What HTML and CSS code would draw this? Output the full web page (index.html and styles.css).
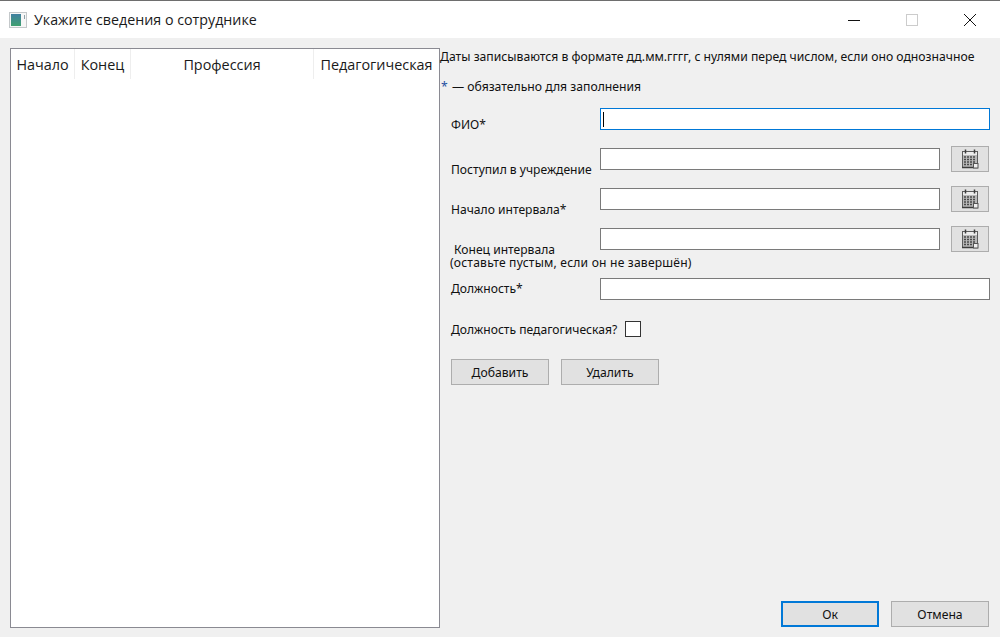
FILE: index.html
```html
<!DOCTYPE html>
<html>
  <head>
    <meta charset="utf-8" />
    <title>Укажите сведения о сотруднике</title>
    <link rel="stylesheet" href="styles.css">
  </head>

  <body>
    <div class="titlebar">
      <svg class="app-icon" width="18" height="16" viewBox="0 0 18 16">
        <defs>
          <linearGradient id="appfill" x1="0" y1="0" x2="0" y2="1">
            <stop offset="0" stop-color="#3f7fa0" />
            <stop offset="1" stop-color="#3fa070" />
          </linearGradient>
        </defs>
        <rect x="0.5" y="0.5" width="17" height="15" fill="#f6f6f6" stroke="#c4c8ca" />
        <rect x="2" y="2" width="10" height="12" fill="url(#appfill)" />
        <rect x="15" y="3" width="1" height="4" fill="#8fa0a8" />
      </svg>
      <span class="title">Укажите сведения о сотруднике</span>
      <div class="win-buttons">
        <svg width="12" height="12" viewBox="0 0 12 12"><path d="M0 6.5H12" stroke="#111" fill="none" /></svg>
        <svg width="12" height="12" viewBox="0 0 12 12"><rect x="0.5" y="0.5" width="11" height="11" stroke="#ccc" fill="none" /></svg>
        <svg width="12" height="12" viewBox="0 0 12 12"><path d="M0 0L12 12M12 0L0 12" stroke="#111" fill="none" /></svg>
      </div>
    </div>

    <div class="content">
      <div class="table">
        <div class="thead">
          <div class="th th-start">Начало</div>
          <div class="th th-end">Конец</div>
          <div class="th th-job">Профессия</div>
          <div class="th th-ped">Педагогическая</div>
        </div>
      </div>

      <div class="panel">
        <p class="hint">Даты записываются в формате дд.мм.гггг, с нулями перед числом, если оно однозначное</p>
        <p class="hint hint-req"><span class="star">*</span> — обязательно для заполнения</p>

        <div class="form">
          <div class="row row-name">
            <label class="lbl">ФИО*</label>
            <div class="field focused"><span class="caret"></span></div>
          </div>
          <div class="row row-date">
            <label class="lbl">Поступил в учреждение</label>
            <div class="field"></div>
            <button class="cal" type="button"><svg width="18" height="20" viewBox="0 0 18 20"><use href="#calendar" /></svg></button>
          </div>
          <div class="row row-date">
            <label class="lbl lbl-start">Начало интервала*</label>
            <div class="field"></div>
            <button class="cal" type="button"><svg width="18" height="20" viewBox="0 0 18 20"><use href="#calendar" /></svg></button>
          </div>
          <div class="row row-date row-end">
            <label class="lbl lbl-end"><span class="indent">Конец интервала</span><br /><span class="note">(оставьте пустым, если он не завершён)</span></label>
            <div class="field"></div>
            <button class="cal" type="button"><svg width="18" height="20" viewBox="0 0 18 20"><use href="#calendar" /></svg></button>
          </div>
          <div class="row row-post">
            <label class="lbl">Должность*</label>
            <div class="field"></div>
          </div>
        </div>

        <div class="check-row">
          <span>Должность педагогическая?</span>
          <span class="checkbox"></span>
        </div>

        <div class="actions">
          <button class="btn" type="button">Добавить</button>
          <button class="btn" type="button">Удалить</button>
        </div>

        <div class="footer">
          <button class="btn btn-default" type="button">Ок</button>
          <button class="btn" type="button">Отмена</button>
        </div>
      </div>
    </div>

    <!-- calendar icon used by the three date buttons -->
    <svg class="defs" width="0" height="0">
      <symbol id="calendar" viewBox="0 0 18 20">
        <rect x="1.5" y="2.5" width="15" height="16" fill="#b8b8b8" stroke="#5c5c5c" />
        <rect x="2" y="3" width="14" height="3" fill="#ececec" />
        <path d="M4.5 0.5V4.5M13.5 0.5V4.5" stroke="#3c3c3c" stroke-width="1.5" fill="none" />
        <path d="M3 8H15M3 10.5H15M3 13H15M3 15.5H12" stroke="#4a4a4a" stroke-width="1.5" stroke-dasharray="2 1" fill="none" />
        <path d="M1 18.5H17" stroke="#3c3c3c" stroke-width="1.5" fill="none" />
        <rect x="12.5" y="14.5" width="4.5" height="4.5" fill="#efefef" stroke="#555" />
      </symbol>
    </svg>
  </body>
</html>
```

FILE: styles.css
```css
* {
  box-sizing: border-box;
}

html,
body {
  height: 637px;
  margin: 0;
  overflow: hidden;
}

body {
  background-color: #f0f0f0;
  color: #111;
  font-family: "Noto Sans", Tahoma, sans-serif;
  font-size: 12.2px;
}

.defs {
  display: block;
  height: 0;
}

.titlebar {
  height: 38px;
  display: flex;
  align-items: center;
  padding-left: 9px;
  background-color: #fff;
  border-top: 1px solid #6e6e6e;
}

.title {
  margin-left: 7px;
  font-family: "Open Sans", sans-serif;
  font-size: 14.25px;
  color: #1a1a1a;
}

.win-buttons {
  margin-left: auto;
  display: flex;
  gap: 46px;
  padding-right: 24px;
}

.content {
  display: flex;
  padding: 10px 10px 9px 10px;
  height: 599px;
}

.table {
  width: 430px;
  height: 580px;
  background-color: #fff;
  border: 1px solid #8a8a92;
}

.thead {
  display: flex;
  height: 30px;
}

.th {
  font-family: "Open Sans", sans-serif;
  font-size: 14.4px;
  line-height: 32px;
  height: 30px;
  text-align: center;
  color: #1a1a1a;
  border-right: 1px solid #eee;
}

.th-start {
  width: 64px;
}

.th-end {
  width: 56px;
}

.th-job {
  width: 183px;
}

.th-ped {
  flex: 1;
  border-right: none;
}

.panel {
  flex: 1;
  position: relative;
}

.hint {
  margin: 0;
  height: 14px;
  line-height: 14px;
  margin-top: 2px;
  white-space: nowrap;
}

.hint-req {
  margin-top: 16px;
  padding-left: 1px;
}

.star {
  color: #1f4fa0;
  margin-right: 1px;
}

.form {
  margin-top: 14px;
  font-size: 12.1px;
}

.row {
  display: flex;
  height: 40px;
  align-items: flex-start;
}

.row-post {
  margin-top: 10px;
}

.lbl {
  width: 160px;
  flex-shrink: 0;
  padding-left: 11px;
  white-space: nowrap;
  line-height: 14px;
}

.row-name .lbl {
  padding-top: 10px;
}

.row-date .lbl {
  padding-top: 15px;
}

.row-post .lbl {
  padding-top: 4px;
}

.row-date .lbl-end {
  padding-left: 10px;
  line-height: 13px;
}

.indent {
  padding-left: 4px;
}

.note {
  letter-spacing: 0.2px;
}

.field {
  flex: 1;
  height: 22px;
  background-color: #fff;
  border: 1px solid #7a7a7a;
}

.field.focused {
  border-color: #0078d7;
  padding: 3px 2px;
}

.caret {
  display: block;
  width: 1px;
  height: 15px;
  background-color: #000;
}

.cal {
  width: 38px;
  height: 26px;
  margin: -2px 1px 0 11px;
  padding: 0;
  display: flex;
  align-items: center;
  justify-content: center;
  background-color: #e1e1e1;
  border: 1px solid #adadad;
}

.check-row {
  display: flex;
  align-items: center;
  height: 16px;
  margin-top: 3px;
  padding-left: 11px;
  gap: 8px;
  font-size: 12.1px;
}

.checkbox {
  width: 16px;
  height: 16px;
  background-color: #fff;
  border: 1px solid #333;
}

.actions {
  display: flex;
  gap: 12px;
  margin-top: 22px;
  padding-left: 11px;
}

.btn {
  width: 98px;
  height: 26px;
  padding: 0;
  font: inherit;
  color: #111;
  background-color: #e1e1e1;
  border: 1px solid #adadad;
}

.btn-default {
  border: 2px solid #0078d7;
}

.footer {
  position: absolute;
  right: 1px;
  bottom: 1px;
  display: flex;
  gap: 12px;
}
```
